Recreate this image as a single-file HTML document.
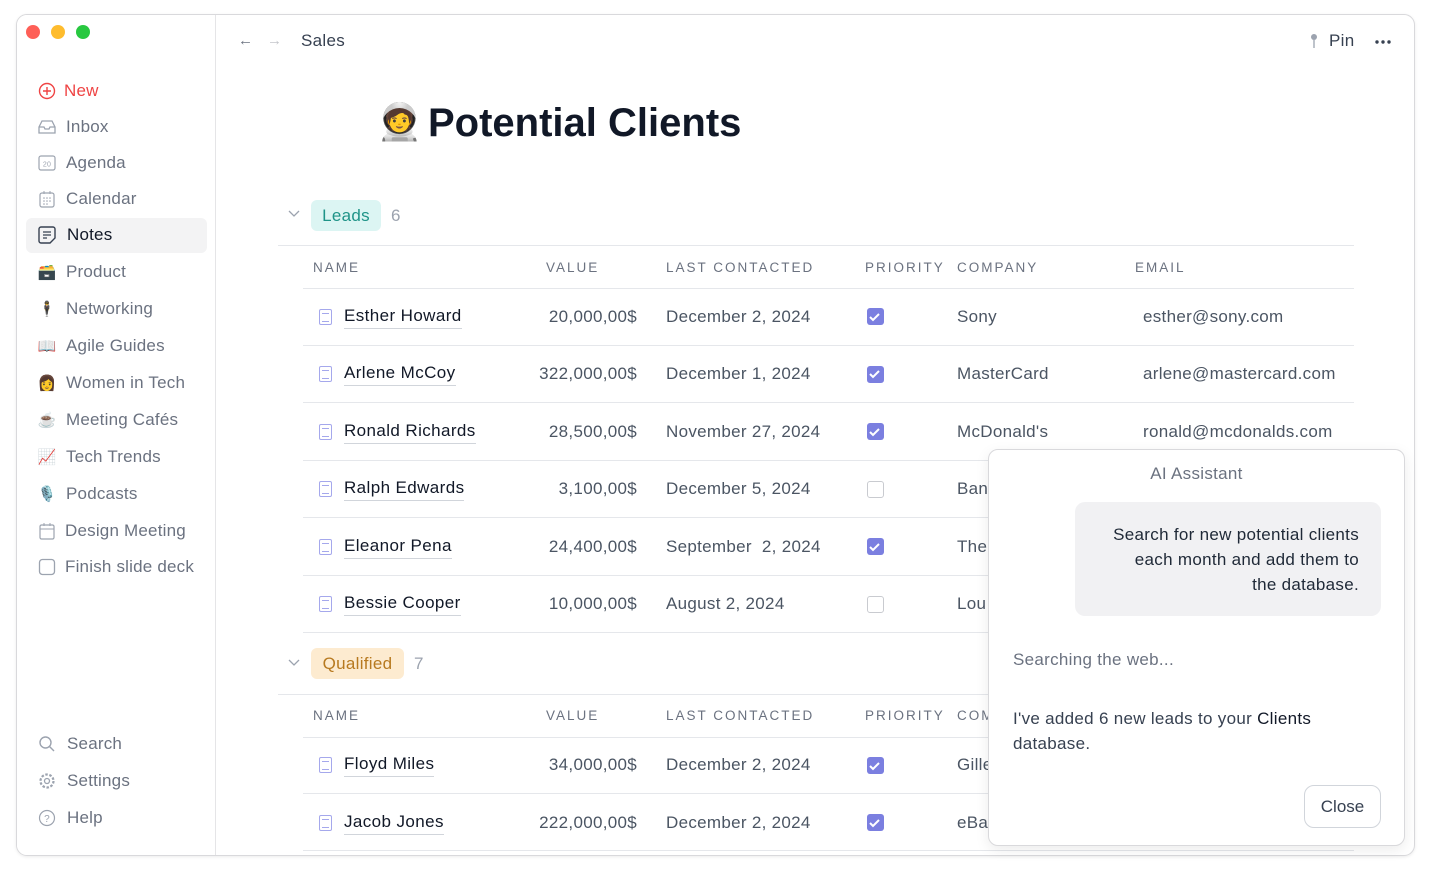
<!DOCTYPE html>
<html><head><meta charset="utf-8"><style>
*{box-sizing:border-box;margin:0;padding:0}
body{width:1430px;height:872px;background:#fff;font-family:"Liberation Sans",sans-serif;position:relative;overflow:hidden;color:#1f2937}
.win{position:absolute;left:16px;top:14px;width:1399px;height:842px;border:1px solid #d9d9dc;border-radius:11px;background:#fff;overflow:hidden;box-shadow:0 1px 3px rgba(0,0,0,.08)}
.side{position:absolute;left:0;top:0;width:199px;height:100%;border-right:1px solid #e5e5e7;background:#fff}
.dot{position:absolute;top:10px;width:14px;height:14px;border-radius:50%}
.si{position:absolute;left:20px;font-size:17px;color:#6b7280;display:flex;align-items:center;height:26px;letter-spacing:.2px}
.si .ic{width:20px;height:20px;margin-right:9px;display:inline-flex;align-items:center;justify-content:center;font-size:15px}
.abs{position:absolute}
.th{position:absolute;font-size:13.5px;letter-spacing:2px;color:#6b7280}
.td{position:absolute;font-size:17px;color:#4b5563;white-space:nowrap;letter-spacing:.3px}
.r{text-align:right;width:130px}
.nm{position:absolute;font-size:17px;color:#111827;border-bottom:1px solid #d1d5db;padding-bottom:2px;white-space:nowrap;letter-spacing:.4px}
.hl{position:absolute;height:1px;background:#e5e7eb}
.cb{position:absolute;width:17px;height:17px;border-radius:3px}
.on{background:#7b7fe0}
.off{border:1.5px solid #c9cbd0;background:#fff}
.doc{position:absolute;width:13px;height:16px;border:1.3px solid #a5a8ec;border-radius:2px}
.doc:after{content:"";position:absolute;left:2px;top:3px;width:7px;height:7px;border-top:1.2px solid #a5a8ec;border-bottom:1.2px solid #a5a8ec}
</style></head><body>
<div class="win">
<div class="side">
<div class="dot" style="left:9px;background:#fe5f57"></div>
<div class="dot" style="left:34px;background:#febc2e"></div>
<div class="dot" style="left:59px;background:#28c840"></div>
<div class="si" style="top:63px;color:#ef4444"><span class="ic" style="margin-right:7px"><svg width="18" height="18"><circle cx="9" cy="9" r="7.5" fill="none" stroke="#ef4444" stroke-width="1.4"/><path d="M9 5v8M5 9h8" stroke="#ef4444" stroke-width="1.4"/></svg></span>New</div>
<div class="si" style="top:99px"><span class="ic"><svg width="18" height="16"><path d="M1 8l3-6h10l3 6v6H1zM1 8h5l1 2h4l1-2h5" fill="none" stroke="#9ca3af" stroke-width="1.3"/></svg></span>Inbox</div>
<div class="si" style="top:135px"><span class="ic"><svg width="18" height="16"><rect x="1" y="1" width="16" height="14" rx="2" fill="none" stroke="#9ca3af" stroke-width="1.2"/><text x="9" y="11.5" font-size="7" text-anchor="middle" fill="#9ca3af" font-family="Liberation Sans">20</text></svg></span>Agenda</div>
<div class="si" style="top:171px"><span class="ic"><svg width="18" height="18"><rect x="2" y="3" width="14" height="14" rx="2" fill="none" stroke="#9ca3af" stroke-width="1.2"/><path d="M6 1v3M12 1v3" stroke="#9ca3af"/><g fill="#9ca3af"><circle cx="6" cy="8" r=".8"/><circle cx="9" cy="8" r=".8"/><circle cx="12" cy="8" r=".8"/><circle cx="6" cy="11" r=".8"/><circle cx="9" cy="11" r=".8"/><circle cx="12" cy="11" r=".8"/><circle cx="6" cy="14" r=".8"/><circle cx="9" cy="14" r=".8"/></g></svg></span>Calendar</div>
<div class="abs" style="left:9px;top:203px;width:181px;height:35px;background:#f3f3f4;border-radius:6px"></div>
<div class="si" style="top:207px;color:#111827"><span class="ic" style="margin-right:10px"><svg width="18" height="18"><path d="M3 1h12a2 2 0 0 1 2 2v9l-5 5H3a2 2 0 0 1-2-2V3a2 2 0 0 1 2-2z" fill="none" stroke="#374151" stroke-width="1.4"/><path d="M5 6h8M5 9h8M5 12h4" stroke="#374151" stroke-width="1.3"/></svg></span>Notes</div>
<div class="si" style="top:244px"><span class="ic">🗃️</span>Product</div>
<div class="si" style="top:281px"><span class="ic">🕴️</span>Networking</div>
<div class="si" style="top:318px"><span class="ic">📖</span>Agile Guides</div>
<div class="si" style="top:355px"><span class="ic">👩</span>Women in Tech</div>
<div class="si" style="top:392px"><span class="ic">☕</span>Meeting Cafés</div>
<div class="si" style="top:429px"><span class="ic">📈</span>Tech Trends</div>
<div class="si" style="top:466px"><span class="ic">🎙️</span>Podcasts</div>
<div class="si" style="top:503px"><span class="ic" style="margin-right:8px"><svg width="18" height="18"><rect x="2" y="3" width="14" height="14" rx="1.5" fill="none" stroke="#9ca3af" stroke-width="1.2"/><path d="M6 1v3M12 1v3M2 7h14" stroke="#9ca3af"/></svg></span>Design Meeting</div>
<div class="si" style="top:539px"><span class="ic" style="margin-right:8px"><svg width="18" height="18"><rect x="1.5" y="1.5" width="15" height="15" rx="3" fill="none" stroke="#9ca3af" stroke-width="1.3"/></svg></span>Finish slide deck</div>
<div class="si" style="top:716px"><span class="ic" style="margin-right:10px"><svg width="18" height="18"><circle cx="7.5" cy="7.5" r="5.5" fill="none" stroke="#9ca3af" stroke-width="1.4"/><path d="M11.5 11.5l4.5 4.5" stroke="#9ca3af" stroke-width="1.4"/></svg></span>Search</div>
<div class="si" style="top:753px"><span class="ic" style="margin-right:10px"><svg width="18" height="18"><circle cx="9" cy="9" r="6.5" fill="none" stroke="#9ca3af" stroke-width="2.2" stroke-dasharray="2.5 1.6"/><circle cx="9" cy="9" r="2.5" fill="none" stroke="#9ca3af" stroke-width="1.3"/></svg></span>Settings</div>
<div class="si" style="top:790px"><span class="ic" style="margin-right:10px"><svg width="18" height="18"><circle cx="9" cy="9" r="7.5" fill="none" stroke="#9ca3af" stroke-width="1.2"/><text x="9" y="13" font-size="10" text-anchor="middle" fill="#9ca3af" font-family="Liberation Sans">?</text></svg></span>Help</div>
</div>
<div class="abs" style="left:221px;top:17px;font-size:15px;color:#6b7280">←</div>
<div class="abs" style="left:250px;top:17px;font-size:15px;color:#c4c6cb">→</div>
<div class="abs" style="left:284px;top:16px;font-size:17px;color:#374151;letter-spacing:.3px">Sales</div>
<svg class="abs" style="left:1292px;top:18px" width="10" height="16"><circle cx="5" cy="4" r="3" fill="#9ca3af"/><path d="M5 7v8" stroke="#9ca3af" stroke-width="1.3"/></svg>
<div class="abs" style="left:1312px;top:16px;font-size:17px;color:#374151;letter-spacing:.3px">Pin</div>
<svg class="abs" style="left:1357px;top:24px" width="18" height="6"><g fill="#374151"><circle cx="3" cy="3" r="1.7"/><circle cx="9" cy="3" r="1.7"/><circle cx="15" cy="3" r="1.7"/></g></svg>
<div class="abs" style="left:360px;top:86px;font-size:36px">🧑‍🚀</div>
<div class="abs" style="left:411px;top:86px;font-size:40px;font-weight:bold;color:#111827">Potential Clients</div>
</div>

<svg class="abs" style="left:288px;top:210px" width="12" height="8"><path d="M1 1l5 5 5-5" fill="none" stroke="#9ca3af" stroke-width="1.3"/></svg>
<div class="abs" style="left:311px;top:200px;width:70px;height:31px;border-radius:6px;background:#dcf5f3;color:#1f9488;font-size:17px;text-align:center;line-height:31px;letter-spacing:.3px">Leads</div>
<div class="abs" style="left:391px;top:206px;font-size:17px;color:#9ca3af">6</div>
<div class="hl" style="left:278px;top:245px;width:1076px"></div>
<div class="th" style="left:313px;top:260px">NAME</div><div class="th" style="left:546px;top:260px">VALUE</div><div class="th" style="left:666px;top:260px">LAST CONTACTED</div><div class="th" style="left:865px;top:260px">PRIORITY</div><div class="th" style="left:957px;top:260px">COMPANY</div><div class="th" style="left:1135px;top:260px">EMAIL</div>
<div class="hl" style="left:303px;top:288px;width:1051px"></div>

<div class="doc" style="left:319px;top:309px"></div><div class="nm" style="left:344px;top:306px">Esther Howard</div><div class="td r" style="left:507px;top:307px">20,000,00$</div><div class="td" style="left:666px;top:307px">December 2, 2024</div><div class="cb on" style="left:867px;top:308px"></div><div class="td" style="left:957px;top:307px">Sony</div><div class="td" style="left:1143px;top:307px">esther@sony.com</div>
<div class="hl" style="left:303px;top:345px;width:1051px"></div>
<div class="doc" style="left:319px;top:366px"></div><div class="nm" style="left:344px;top:363px">Arlene McCoy</div><div class="td r" style="left:507px;top:364px">322,000,00$</div><div class="td" style="left:666px;top:364px">December 1, 2024</div><div class="cb on" style="left:867px;top:366px"></div><div class="td" style="left:957px;top:364px">MasterCard</div><div class="td" style="left:1143px;top:364px">arlene@mastercard.com</div>
<div class="hl" style="left:303px;top:402px;width:1051px"></div>
<div class="doc" style="left:319px;top:424px"></div><div class="nm" style="left:344px;top:421px">Ronald Richards</div><div class="td r" style="left:507px;top:422px">28,500,00$</div><div class="td" style="left:666px;top:422px">November 27, 2024</div><div class="cb on" style="left:867px;top:423px"></div><div class="td" style="left:957px;top:422px">McDonald's</div><div class="td" style="left:1143px;top:422px">ronald@mcdonalds.com</div>
<div class="hl" style="left:303px;top:460px;width:1051px"></div>
<div class="doc" style="left:319px;top:481px"></div><div class="nm" style="left:344px;top:478px">Ralph Edwards</div><div class="td r" style="left:507px;top:479px">3,100,00$</div><div class="td" style="left:666px;top:479px">December 5, 2024</div><div class="cb off" style="left:867px;top:481px"></div><div class="td" style="left:957px;top:479px">Ban</div>
<div class="hl" style="left:303px;top:517px;width:1051px"></div>
<div class="doc" style="left:319px;top:539px"></div><div class="nm" style="left:344px;top:536px">Eleanor Pena</div><div class="td r" style="left:507px;top:537px">24,400,00$</div><div class="td" style="left:666px;top:537px">September&nbsp; 2, 2024</div><div class="cb on" style="left:867px;top:538px"></div><div class="td" style="left:957px;top:537px">The</div>
<div class="hl" style="left:303px;top:575px;width:1051px"></div>
<div class="doc" style="left:319px;top:596px"></div><div class="nm" style="left:344px;top:593px">Bessie Cooper</div><div class="td r" style="left:507px;top:594px">10,000,00$</div><div class="td" style="left:666px;top:594px">August 2, 2024</div><div class="cb off" style="left:867px;top:596px"></div><div class="td" style="left:957px;top:594px">Lou</div>
<div class="hl" style="left:303px;top:632px;width:1051px"></div>

<svg class="abs" style="left:288px;top:659px" width="12" height="8"><path d="M1 1l5 5 5-5" fill="none" stroke="#9ca3af" stroke-width="1.3"/></svg>
<div class="abs" style="left:311px;top:648px;width:93px;height:31px;border-radius:6px;background:#fdebd0;color:#b7791f;font-size:17px;text-align:center;line-height:31px;letter-spacing:.3px">Qualified</div>
<div class="abs" style="left:414px;top:654px;font-size:17px;color:#9ca3af">7</div>
<div class="hl" style="left:278px;top:694px;width:1076px"></div>
<div class="th" style="left:313px;top:708px">NAME</div><div class="th" style="left:546px;top:708px">VALUE</div><div class="th" style="left:666px;top:708px">LAST CONTACTED</div><div class="th" style="left:865px;top:708px">PRIORITY</div><div class="th" style="left:957px;top:708px">COM</div>
<div class="hl" style="left:303px;top:737px;width:1051px"></div>
<div class="doc" style="left:319px;top:757px"></div><div class="nm" style="left:344px;top:754px">Floyd Miles</div><div class="td r" style="left:507px;top:755px">34,000,00$</div><div class="td" style="left:666px;top:755px">December 2, 2024</div><div class="cb on" style="left:867px;top:757px"></div><div class="td" style="left:957px;top:755px">Gille</div>
<div class="hl" style="left:303px;top:793px;width:1051px"></div>
<div class="doc" style="left:319px;top:815px"></div><div class="nm" style="left:344px;top:812px">Jacob Jones</div><div class="td r" style="left:507px;top:813px">222,000,00$</div><div class="td" style="left:666px;top:813px">December 2, 2024</div><div class="cb on" style="left:867px;top:814px"></div><div class="td" style="left:957px;top:813px">eBa</div>
<div class="hl" style="left:303px;top:850px;width:1051px"></div>

<svg class="abs" style="left:0;top:0" width="1430" height="872"><g fill="none" stroke="#fff" stroke-width="2">
<path d="M870 317l3 3 6-6M870 374l3 3 6-6M870 432l3 3 6-6M870 547l3 3 6-6M870 766l3 3 6-6M870 823l3 3 6-6"/></g></svg>

<div class="abs" style="left:988px;top:449px;width:417px;height:397px;border:1px solid #d9d9dc;border-radius:10px;background:#fff;box-shadow:0 4px 14px rgba(0,0,0,.08)">
<div class="abs" style="left:0;width:100%;top:14px;text-align:center;font-size:17px;color:#6b7280;letter-spacing:.3px">AI Assistant</div>
<div class="abs" style="left:86px;top:52px;width:306px;height:114px;background:#f1f1f3;border-radius:10px;padding:20px 22px 0 0;text-align:right;font-size:17px;line-height:25px;color:#1f2937;letter-spacing:.3px">Search for new potential clients<br>each month and add them to<br>the database.</div>
<div class="abs" style="left:24px;top:200px;font-size:17px;color:#6b7280;letter-spacing:.3px">Searching the web...</div>
<div class="abs" style="left:24px;top:256px;font-size:17px;line-height:25px;color:#374151;width:340px;letter-spacing:.3px">I've added 6 new leads to your <span style="color:#111827">Clients</span> database.</div>
<div class="abs" style="left:315px;top:335px;width:77px;height:43px;border:1px solid #d1d5db;border-radius:10px;font-size:17px;text-align:center;line-height:41px;color:#374151">Close</div>
</div>
</body></html>
